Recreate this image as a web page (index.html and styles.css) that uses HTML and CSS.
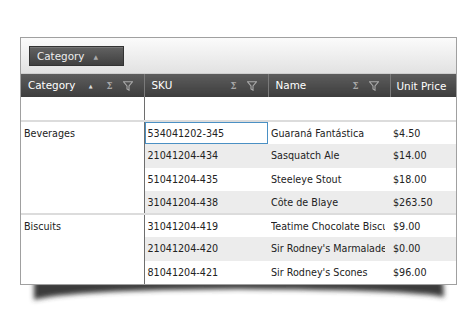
FILE: index.html
```html
<!DOCTYPE html>
<html lang="en">

<head>
    <meta charset="UTF-8">
    <title>Grid grouping</title>
    <link rel="stylesheet" href="styles.css">
</head>

<body>
    <div class="grid">
        <div class="group-panel">
            <span class="chip">Category <span class="chip-sort">&#9650;</span></span>
        </div>
        <table class="data">
            <colgroup>
                <col class="col-cat">
                <col class="col-sku">
                <col class="col-name">
                <col class="col-price">
            </colgroup>
            <thead>
                <tr>
                    <th>
                        <span class="title">Category</span>
                        <span class="tools"><span class="sort">&#9650;</span><span class="sigma">&Sigma;</span><svg class="funnel" viewBox="0 0 10 10"><path d="M0.5 0.8h9L6 5v4.2L4 8V5z"/></svg></span>
                    </th>
                    <th>
                        <span class="title">SKU</span>
                        <span class="tools"><span class="sigma">&Sigma;</span><svg class="funnel" viewBox="0 0 10 10"><path d="M0.5 0.8h9L6 5v4.2L4 8V5z"/></svg></span>
                    </th>
                    <th>
                        <span class="title">Name</span>
                        <span class="tools"><span class="sigma">&Sigma;</span><svg class="funnel" viewBox="0 0 10 10"><path d="M0.5 0.8h9L6 5v4.2L4 8V5z"/></svg></span>
                    </th>
                    <th class="last">
                        <span class="title">Unit Price</span>
                    </th>
                </tr>
            </thead>
            <tbody>
                <tr class="filter">
                    <td class="cat"></td>
                    <td></td>
                    <td></td>
                    <td></td>
                </tr>
                <tr class="group-start">
                    <td class="cat" rowspan="4">Beverages</td>
                    <td class="selected">534041202-345</td>
                    <td><span class="cut">Guaraná Fantástica</span></td>
                    <td>$4.50</td>
                </tr>
                <tr class="alt">
                    <td>21041204-434</td>
                    <td><span class="cut">Sasquatch Ale</span></td>
                    <td>$14.00</td>
                </tr>
                <tr>
                    <td>51041204-435</td>
                    <td><span class="cut">Steeleye Stout</span></td>
                    <td>$18.00</td>
                </tr>
                <tr class="alt">
                    <td>31041204-438</td>
                    <td><span class="cut">Côte de Blaye</span></td>
                    <td>$263.50</td>
                </tr>
                <tr class="group-start">
                    <td class="cat" rowspan="3">Biscuits</td>
                    <td>31041204-419</td>
                    <td><span class="cut">Teatime Chocolate Biscuits</span></td>
                    <td>$9.00</td>
                </tr>
                <tr class="alt">
                    <td>21041204-420</td>
                    <td><span class="cut">Sir Rodney's Marmalade</span></td>
                    <td>$0.00</td>
                </tr>
                <tr>
                    <td>81041204-421</td>
                    <td><span class="cut">Sir Rodney's Scones</span></td>
                    <td>$96.00</td>
                </tr>
            </tbody>
        </table>
    </div>
    <svg class="shadow" viewBox="0 0 437 26">
        <defs>
            <filter id="soft" x="-10%" y="-100%" width="120%" height="300%">
                <feGaussianBlur stdDeviation="2.6"/>
            </filter>
        </defs>
        <path d="M14 -4H423L424 12Q390 5 218 4Q50 5 14 15Z" fill="#3a3a3a" filter="url(#soft)"/>
    </svg>
</body>

</html>
```

FILE: styles.css
```css
html {
    height: 100%;
}

body {
    margin: 0;
    padding: 37px 0 0 20px;
    background: #fff;
    font-family: 'DejaVu Sans', Verdana, sans-serif;
    font-size: 9.6px;
    color: #222;
}

.grid {
    position: relative;
    z-index: 1;
    width: 435px;
    border: 1px solid #a0a0a0;
    background: #fff;
}

.shadow {
    display: block;
    width: 437px;
    height: 26px;
}

.group-panel {
    height: 36px;
    padding: 8px 0 0 8px;
    box-sizing: border-box;
    background: linear-gradient(#fbfbfb, #e2e2e2);
    border-bottom: 1px solid #cfcfcf;
}

.chip {
    display: inline-flex;
    align-items: center;
    width: 95px;
    height: 20px;
    padding-left: 7px;
    box-sizing: border-box;
    border: 1px solid #333;
    background: linear-gradient(#626262, #404040);
    box-shadow: inset 0 1px 0 #777;
    color: #eee;
    font-size: 10.4px;
}

.chip-sort {
    margin-left: 9px;
    font-size: 6px;
    color: #aaa;
}

.data {
    width: 100%;
    table-layout: fixed;
    border-collapse: collapse;
}

.col-cat {
    width: 123px;
}

.col-sku {
    width: 124px;
}

.col-name {
    width: 122px;
}

th {
    height: 23px;
    padding: 0 11px 0 7px;
    background: linear-gradient(#5d5d5d, #3d3d3d);
    border-right: 1px solid #7a7a7a;
    color: #fff;
    font-weight: normal;
    font-size: 10.4px;
    text-align: left;
    white-space: nowrap;
}

th.last {
    border-right: 0;
    padding-left: 6px;
}

th .title {
    float: left;
}

th .tools {
    float: right;
    display: flex;
    align-items: center;
    gap: 10px;
    height: 13px;
    color: #a8a8a8;
}

.sort {
    margin-right: 4px;
    font-size: 5px;
    color: #ddd;
}

.sigma {
    font-size: 8.5px;
    font-weight: bold;
    font-family: 'DejaVu Serif', serif;
}

.funnel {
    width: 10px;
    height: 10px;
    fill: none;
    stroke: #aaa;
    stroke-width: 1.1;
}

td {
    height: 23px;
    padding: 0 3px;
    box-sizing: border-box;
    white-space: nowrap;
    overflow: hidden;
    vertical-align: middle;
}

td .cut {
    display: block;
    width: 114px;
    overflow: hidden;
}

td.cat {
    vertical-align: top;
    padding-top: 6px;
    border-right: 1px solid #6e6e6e;
}

.filter td {
    height: 24px;
}

.group-start td {
    border-top: 2px solid #dcdcdc;
}

.group-start + tr td,
.group-start + tr + tr td {
    height: 23.5px;
}

.alt td {
    background: #ececec;
}

td.selected {
    box-shadow: inset 0 0 0 1px #4a90c4;
}
```
